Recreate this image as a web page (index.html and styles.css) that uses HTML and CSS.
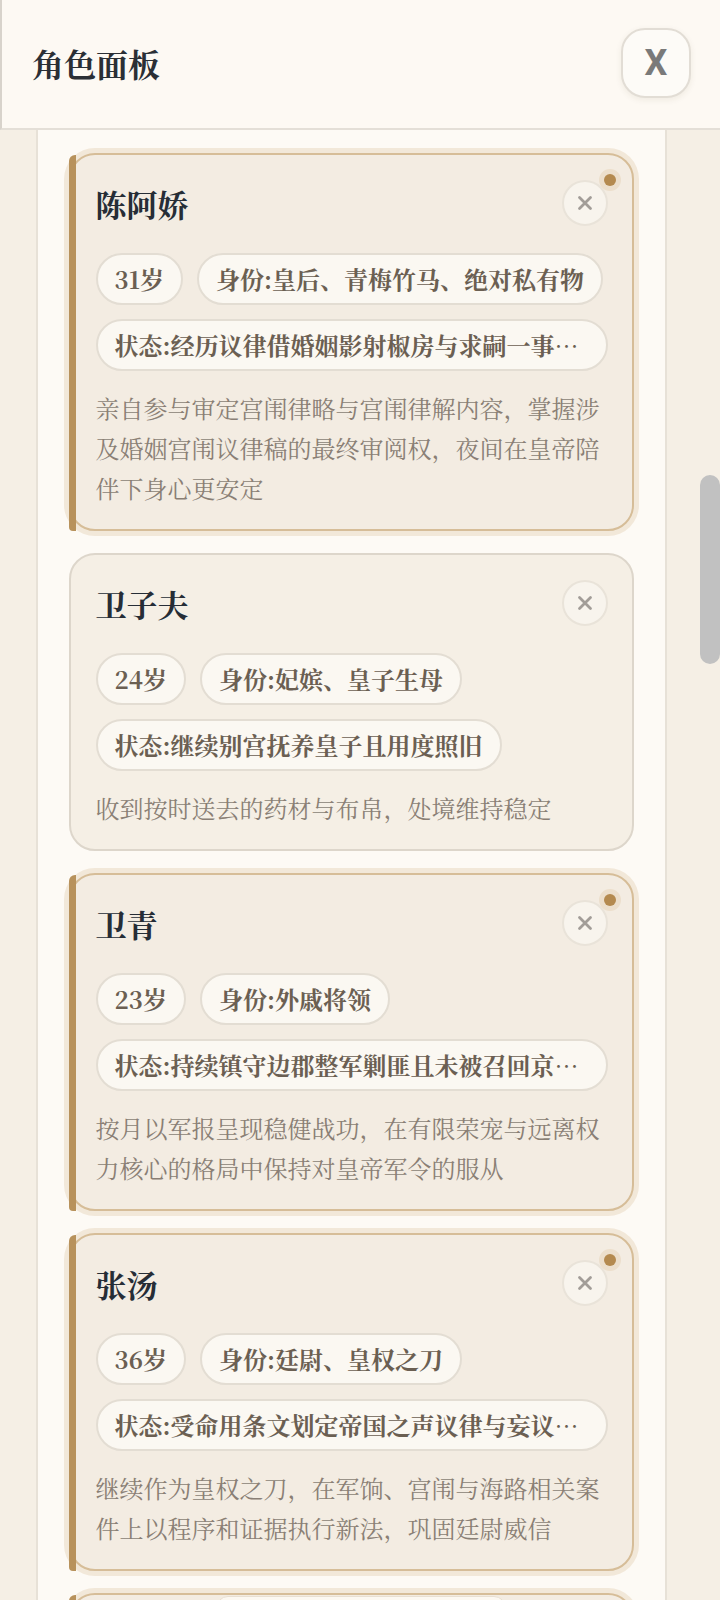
FILE: index.html
```html
<!DOCTYPE html>
<html lang="zh-CN">
<head>
<meta charset="utf-8">
<title>角色面板</title>
<link rel="stylesheet" href="styles.css">
</head>
<body>
<div class="sheet">
  <header class="sheet-header">
    <h1 class="sheet-title">角色面板</h1>
    <button class="close-btn" type="button">X</button>
  </header>
  <div class="sheet-body">
    <div class="scroll-area">
      <div class="panel">
        <div class="card-list">

          <article class="card card-active">
            <span class="card-dot"></span>
            <div class="card-head">
              <h2 class="card-name">陈阿娇</h2>
              <button class="card-remove" type="button" aria-label="移除">
                <svg viewBox="0 0 16 16" width="16" height="16"><path d="M2.5 2.5 L13.5 13.5 M13.5 2.5 L2.5 13.5"/></svg>
              </button>
            </div>
            <div class="chips">
              <span class="chip">31岁</span>
              <span class="chip">身份:皇后、青梅竹马、绝对私有物</span>
              <span class="chip chip-status">状态:经历议律借婚姻影射椒房与求嗣一事后心绪渐安</span>
            </div>
            <p class="card-desc">亲自参与审定宫闱律略与宫闱律解内容，掌握涉及婚姻宫闱议律稿的最终审阅权，夜间在皇帝陪伴下身心更安定</p>
          </article>

          <article class="card">
            <div class="card-head">
              <h2 class="card-name">卫子夫</h2>
              <button class="card-remove" type="button" aria-label="移除">
                <svg viewBox="0 0 16 16" width="16" height="16"><path d="M2.5 2.5 L13.5 13.5 M13.5 2.5 L2.5 13.5"/></svg>
              </button>
            </div>
            <div class="chips">
              <span class="chip">24岁</span>
              <span class="chip">身份:妃嫔、皇子生母</span>
              <span class="chip chip-status">状态:继续别宫抚养皇子且用度照旧</span>
            </div>
            <p class="card-desc">收到按时送去的药材与布帛，处境维持稳定</p>
          </article>

          <article class="card card-active">
            <span class="card-dot"></span>
            <div class="card-head">
              <h2 class="card-name">卫青</h2>
              <button class="card-remove" type="button" aria-label="移除">
                <svg viewBox="0 0 16 16" width="16" height="16"><path d="M2.5 2.5 L13.5 13.5 M13.5 2.5 L2.5 13.5"/></svg>
              </button>
            </div>
            <div class="chips">
              <span class="chip">23岁</span>
              <span class="chip">身份:外戚将领</span>
              <span class="chip chip-status">状态:持续镇守边郡整军剿匪且未被召回京城述职</span>
            </div>
            <p class="card-desc">按月以军报呈现稳健战功，在有限荣宠与远离权力核心的格局中保持对皇帝军令的服从</p>
          </article>

          <article class="card card-active">
            <span class="card-dot"></span>
            <div class="card-head">
              <h2 class="card-name">张汤</h2>
              <button class="card-remove" type="button" aria-label="移除">
                <svg viewBox="0 0 16 16" width="16" height="16"><path d="M2.5 2.5 L13.5 13.5 M13.5 2.5 L2.5 13.5"/></svg>
              </button>
            </div>
            <div class="chips">
              <span class="chip">36岁</span>
              <span class="chip">身份:廷尉、皇权之刀</span>
              <span class="chip chip-status">状态:受命用条文划定帝国之声议律与妄议之界</span>
            </div>
            <p class="card-desc">继续作为皇权之刀，在军饷、宫闱与海路相关案件上以程序和证据执行新法，巩固廷尉威信</p>
          </article>

          <article class="card card-active card-peek">
            <span class="card-dot"></span>
            <span class="card-pill"></span>
          </article>

        </div>
      </div>
    </div>
    <div class="scroll-track"><div class="scroll-thumb"></div></div>
  </div>
</div>
</body>
</html>
```

FILE: styles.css
```css
* {
  box-sizing: border-box;
}

html, body {
  margin: 0;
  padding: 0;
}

body {
  background: #f5efe5;
  font-family: "Noto Serif CJK SC", "Source Han Serif SC", "Noto Sans CJK SC", "Noto Sans", sans-serif;
  color: #2a2f36;
}

.sheet {
  height: 1600px;
  display: flex;
  flex-direction: column;
  overflow: hidden;
}

.sheet-header {
  flex: 0 0 130px;
  display: flex;
  align-items: center;
  justify-content: space-between;
  padding: 0 29px 2px 30px;
  background: #fdf9f3;
  border-left: 2px solid #d8d3cb;
  border-bottom: 2px solid #e4dfd7;
}

.sheet-title {
  margin: 0;
  font-size: 32px;
  font-weight: 700;
  color: #2b2f35;
  letter-spacing: 0;
}

.close-btn {
  width: 70px;
  height: 70px;
  border-radius: 24px;
  border: 2px solid #e2ddd5;
  background: #fdfbf7;
  box-shadow: 0 2px 6px rgba(80, 60, 30, 0.08);
  font-family: Roboto, "Liberation Sans", sans-serif;
  font-weight: 700;
  font-size: 36px;
  color: #7a7a7a;
  padding: 0;
  display: flex;
  align-items: center;
  justify-content: center;
}

.sheet-body {
  flex: 1;
  min-height: 0;
  display: flex;
  overflow: hidden;
}

.scroll-area {
  flex: 1;
  min-width: 0;
  display: flex;
  justify-content: center;
  padding-left: 2px;
  overflow: hidden;
}

.panel {
  width: 631px;
  flex-shrink: 0;
  background: #fdfaf5;
  border-left: 2px solid #e7e1d7;
  border-right: 2px solid #e7e1d7;
  padding: 23px 31px 0;
}

.card-list {
  display: flex;
  flex-direction: column;
  gap: 22px;
}

.card {
  position: relative;
  background: #f5efe5;
  border: 2px solid #ddd6cb;
  border-radius: 26px;
  padding: 24px 24px 21px 25px;
}

.card-active {
  background: #f3ece2;
  border-color: #d6bd98;
  box-shadow: 0 0 0 5px #f2e8d9;
}

.card-active::before {
  content: "";
  position: absolute;
  left: -2px;
  top: 0;
  bottom: -2px;
  width: 7px;
  background: #b8925c;
  border-radius: 6px 0 0 4px;
}

.card-peek {
  height: 300px;
}

.card-pill {
  position: absolute;
  top: 1px;
  left: 145px;
  width: 290px;
  height: 24px;
  border-radius: 12px;
  background: #fcf8f1;
  border: 1.5px solid #e8dfd2;
}

.card-dot {
  position: absolute;
  top: 19px;
  right: 16px;
  width: 12px;
  height: 12px;
  border-radius: 50%;
  background: #b48a4f;
  box-shadow: 0 0 0 5px #ecdfcc;
}

.card-head {
  height: 48px;
  display: flex;
  align-items: center;
  justify-content: space-between;
}

.card-name {
  margin: 0;
  font-size: 31px;
  font-weight: 700;
  color: #262d36;
}

.card-remove {
  width: 46px;
  height: 46px;
  border-radius: 50%;
  border: 2px solid #e9e3d9;
  background: #f8f4ed;
  padding: 0;
  display: flex;
  align-items: center;
  justify-content: center;
}

.card-remove svg path {
  stroke: #a29d98;
  stroke-width: 2.8;
  stroke-linecap: round;
  fill: none;
}

.chips {
  margin-top: 26px;
  display: flex;
  flex-wrap: wrap;
  gap: 14px;
}

.chip {
  display: inline-block;
  height: 52px;
  line-height: 48px;
  padding: 0 17px;
  border: 2px solid #e3ddd3;
  border-radius: 26px;
  background: #fbf8f2;
  font-size: 24px;
  font-weight: 700;
  color: #6b5f52;
  white-space: nowrap;
}

.chip-status {
  max-width: 100%;
  overflow: hidden;
  text-overflow: ellipsis;
}

.card-desc {
  margin: 17px 0 0;
  font-size: 24px;
  line-height: 40px;
  color: #8a7f75;
}

.scroll-track {
  width: 20px;
  flex-shrink: 0;
  padding-top: 345px;
}

.scroll-thumb {
  height: 189px;
  border-radius: 10px;
  background: #c1c1c1;
}
```
